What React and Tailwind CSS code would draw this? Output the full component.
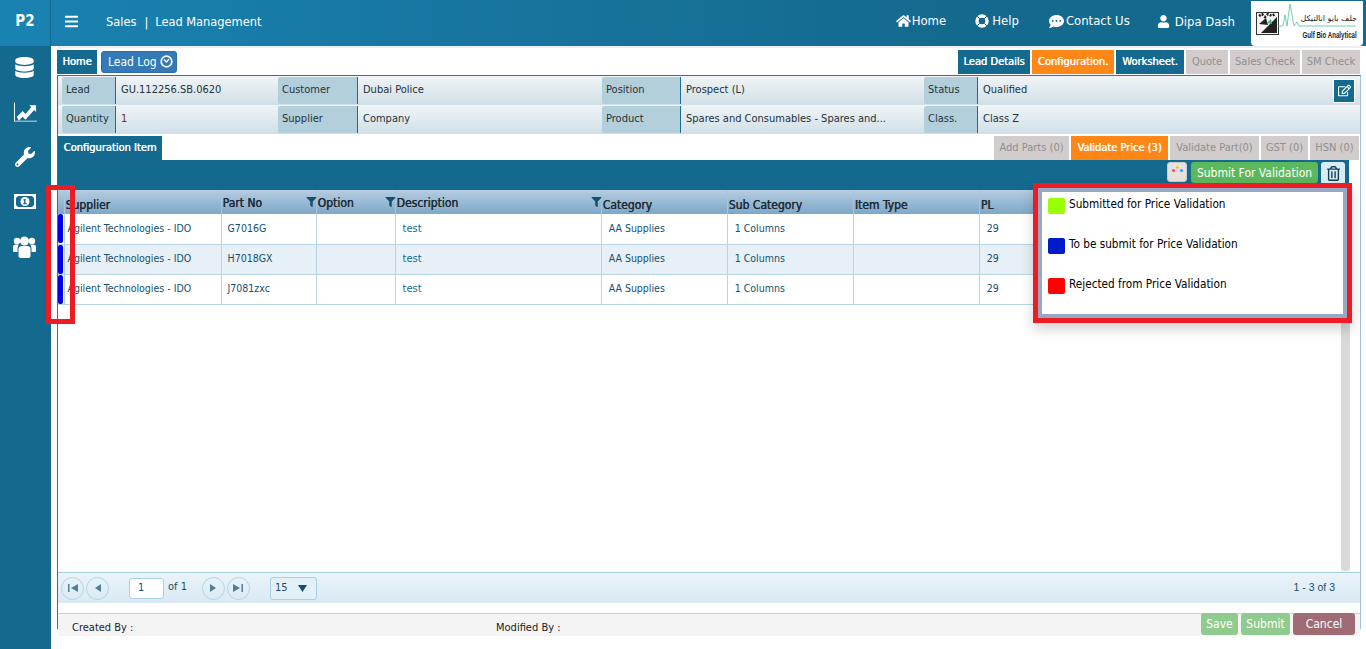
import React from 'react';
import { FaDatabase, FaWrench, FaHome, FaCommentDots, FaUser, FaRegEdit, FaRegTrashAlt, FaFilter, FaBars } from 'react-icons/fa';

const rows = [
  { part: 'G7016G' },
  { part: 'H7018GX' },
  { part: 'J7081zxc' },
];

const columns = [
  { label: 'Supplier', width: 157, low: true },
  { label: 'Part No', width: 95, filter: true },
  { label: 'Option', width: 79, filter: true },
  { label: 'Description', width: 206, filter: true },
  { label: 'Category', width: 126, low: true },
  { label: 'Sub Category', width: 126, low: true },
  { label: 'Item Type', width: 126, low: true },
  { label: 'PL', width: 360, low: true },
];

const InfoLabel = ({ children, width }) => (
  <div className="h-full flex items-center pl-[4px] bg-[#b3cfdb] border-r border-[#1a6d93] rounded-l-[2px] shrink-0" style={{ width }}>
    {children}
  </div>
);

const InfoRow = ({ cells, children }) => (
  <div className="h-[29px] flex items-stretch pl-[4px] py-px bg-gradient-to-b from-[#f0f4f6] to-[#d0e0e8]">
    {cells.map((c) => (
      <React.Fragment key={c.label}>
        <InfoLabel width={c.w}>{c.label}</InfoLabel>
        <div className="flex items-center pl-[5px] shrink-0" style={{ width: c.vw }}>{c.value}</div>
      </React.Fragment>
    ))}
    {children}
  </div>
);

const TopTab = ({ children, tone, w, low }) => {
  const tones = {
    teal: 'bg-[#14698e] text-white [text-shadow:0.4px_0_0_currentColor]',
    orange: 'bg-[#ff8718] text-white [text-shadow:0.4px_0_0_currentColor]',
    grey: 'bg-[#d3cccc] text-[#8f8f8f]',
  };
  return <div className={`h-6 flex items-center justify-center whitespace-nowrap text-[11px] ${low ? 'pt-px' : ''} ${tones[tone]}`} style={{ width: w }}>{children}</div>;
};

const PagerButton = ({ children }) => (
  <div className="w-[23px] h-[23px] rounded-full border border-[#b3d4e6] flex items-center justify-center">
    <svg width="12" height="10" viewBox="0 0 12 10" fill="#4f7f99">{children}</svg>
  </div>
);

const Logo = () => (
  <div className="w-[112px] h-[45px] bg-white rounded-b-[4px] relative overflow-hidden shrink-0">
    <svg width="106" height="36" viewBox="0 0 106 36" className="absolute left-[5px] top-[1px]">
      <rect x="0.5" y="10.5" width="22" height="22" fill="#f4f4f4" stroke="#333" />
      <path d="M5 31 L21 15 L21 31 Z" fill="#222" />
      <path d="M3 14 l3 -2 l3 3 l3 -3 l4 2 l3 -2" stroke="#222" strokeWidth="2.5" fill="none" strokeDasharray="2 1.5" />
      <path d="M3 22 l7 -6 l2 7 z" fill="#222" />
      <path d="M11 21 l4 -4 l1 5 z" fill="#4caf7a" />
      <path d="M22 24 H27 L29 13 L31 24 L34 2 L38 24 L41 20 L43 24 H100" stroke="#4ec39a" strokeWidth="0.8" fill="none" />
    </svg>
    <div className="absolute right-[6px] top-[13px] text-[8px] leading-[10px] text-[#222] font-['DejaVu_Sans',sans-serif]" dir="rtl">جلف بايو انالتيكل</div>
    <div className="absolute right-[6px] top-[29px] text-[9px] leading-[10px] font-bold text-[#222] whitespace-nowrap origin-right scale-x-[0.68] font-['Liberation_Sans',sans-serif]">Gulf Bio Analytical</div>
  </div>
);

const App = () => {
  return (
    <div className="w-[1366px] h-[649px] overflow-hidden bg-white flex flex-col text-[11px] text-[#24323a] font-['DejaVu_Sans_Condensed','DejaVu_Sans',sans-serif] relative">
      {/* header */}
      <header className="h-[46px] flex shrink-0 bg-gradient-to-r from-[#1a82b1] to-[#14698e] to-70% text-white">
        <div className="w-[51px] border-r border-[#14698e] flex items-center justify-center text-[15px] font-bold bg-[#1a82b1] shrink-0 pb-[3px]">P2</div>
        <div className="w-[55px] pl-[13px] pb-[3px] flex items-center shrink-0"><FaBars className="w-[15px] h-[15px]" /></div>
        <div className="text-[12.7px] flex items-center pb-[3px]">Sales<span className="ml-[8px] mr-[7px]">|</span>Lead Management</div>
        <div className="ml-auto flex items-center text-[13px]">
          <span className="flex items-center gap-px mr-[29px] pb-[4px]"><FaHome className="w-[15px] h-[14px]" />Home</span>
          <span className="flex items-center gap-[3px] mr-[30px] pb-[4px]">
            <svg width="14" height="14" viewBox="0 0 14 14">
              <circle cx="7" cy="7" r="5" fill="none" stroke="#fff" strokeWidth="3.4" />
              <path d="M2.2 2.2l2.5 2.5M11.8 2.2L9.3 4.7M2.2 11.8l2.5-2.5M11.8 11.8L9.3 9.3" stroke="#14698e" strokeWidth="1" />
            </svg>
            Help
          </span>
          <span className="flex items-center gap-[2px] mr-[27px] pb-[4px]"><FaCommentDots className="w-[15px] h-[15px]" />Contact Us</span>
          <span className="flex items-center gap-[5px] mr-[16px] pb-[3px]"><FaUser className="w-[13px] h-[13px]" />Dipa Dash</span>
          <div className="mr-[3px]"><Logo /></div>
        </div>
      </header>

      <div className="flex flex-1 min-h-0">
        {/* sidebar */}
        <aside className="w-[51px] bg-[#14698e] text-white shrink-0 flex flex-col items-center pt-[11px] pr-[2px]">
          <FaDatabase className="w-[19px] h-[21px]" />
          <svg width="23" height="20" viewBox="0 0 24 20" fill="#fff" className="mt-[24px] ml-[2px]">
            <path d="M0 0h1v19h23v1H0z" />
            <path d="M3 15l6-6 3 3 6-7-2-2h7v7l-2-2-9 10-3-3-4 4z" />
          </svg>
          <FaWrench className="w-[20px] h-[20px] mt-[25px]" />
          <svg width="22" height="15" viewBox="0 0 22 15" className="mt-[27px]">
            <rect width="22" height="15" fill="#fff" />
            <path d="M4 2h14l2 2v7l-2 2H4l-2-2V4z" fill="#14698e" />
            <circle cx="11" cy="7.500" r="4.500" fill="#fff" />
            <path d="M10 5h1.500v4.200H13v1H9v-1h1.100V6.200H9z" fill="#14698e" />
          </svg>
          <svg width="23" height="22" viewBox="0 0 23 22" fill="#fff" className="mt-[27px]">
            <circle cx="11.5" cy="5" r="4.5" />
            <circle cx="4" cy="5" r="3.2" />
            <circle cx="19" cy="5" r="3.2" />
            <path d="M5.5 13c0-2 1.500-3 3-3h6c1.500 0 3 1 3 3v7c0 1-1 2-2 2h-8c-1 0-2-1-2-2z" />
            <path d="M0 11c0-1.500 1-2.500 2.500-2.500H6c-1 1-1.500 2.500-1.500 4.500v3H1.500C.5 16 0 15.500 0 14.500zM23 11c0-1.500-1-2.500-2.500-2.500H17c1 1 1.500 2.500 1.500 4.500v3h3c1 0 1.500-.5 1.500-1.500z" />
          </svg>
        </aside>

        {/* main */}
        <main className="flex-1 min-w-0 pl-[6px] pr-[5px] flex flex-col">
          {/* top tabs */}
          <div className="flex items-center h-[28px] pt-[1px] border-t-2 border-[#e9eff3]">
            <div className="h-6 w-10 pt-px bg-[#14698e] text-white [text-shadow:0.4px_0_0_currentColor] flex items-center justify-center">Home</div>
            <div className="h-[22px] w-[76px] ml-1 pl-[6px] rounded-[3px] bg-[#337ab7] border border-[#2e6da4] text-white text-[12px] flex items-center gap-[3px]">
              Lead Log
              <svg width="13" height="13" viewBox="0 0 13 13" className="shrink-0">
                <circle cx="6.500" cy="6.500" r="5.300" fill="none" stroke="#fff" strokeWidth="1.700" />
                <path d="M4 4.500L6.500 7 9 4" stroke="#fff" strokeWidth="1.200" fill="none" />
              </svg>
            </div>
            <div className="ml-auto flex gap-[2px] mr-px">
              <TopTab low tone="teal" w={72}>Lead Details</TopTab>
              <TopTab low tone="orange" w={82}>Configuration.</TopTab>
              <TopTab low tone="teal" w={68}>Worksheet.</TopTab>
              <TopTab low tone="grey" w={42}>Quote</TopTab>
              <TopTab low tone="grey" w={70}>Sales Check</TopTab>
              <TopTab low tone="grey" w={58}>SM Check</TopTab>
            </div>
          </div>

          {/* panel */}
          <div className="h-[554px] border-l border-t border-r border-l-[#1f77ad] border-t-[#1f77ad] border-r-[#9cc4dc] flex flex-col mt-px">
            <InfoRow
              cells={[
                { label: 'Lead', w: 54, value: 'GU.112256.SB.0620', vw: 162 },
                { label: 'Customer', w: 80, value: 'Dubai Police', vw: 244 },
                { label: 'Position', w: 79, value: 'Prospect (L)', vw: 243 },
                { label: 'Status', w: 54, value: 'Qualified', vw: 300 },
              ]}
            >
              <div className="ml-auto mr-[5px] w-[22px] h-[24px] bg-[#14698e] text-white flex items-center justify-center self-center border border-white shrink-0">
                <FaRegEdit className="w-[13px] h-[13px]" />
              </div>
            </InfoRow>
            <InfoRow
              cells={[
                { label: 'Quantity', w: 54, value: <span className="text-[#7a2a1a]">1</span>, vw: 162 },
                { label: 'Supplier', w: 80, value: 'Company', vw: 244 },
                { label: 'Product', w: 79, value: 'Spares and Consumables - Spares and...', vw: 243 },
                { label: 'Class.', w: 54, value: 'Class Z', vw: 300 },
              ]}
            />

            {/* sub tabs */}
            <div className="h-[26px] flex items-center pt-[2px]">
              <div className="h-6 w-[104px] bg-[#14698e] text-white [text-shadow:0.4px_0_0_currentColor] flex items-center justify-center whitespace-nowrap">Configuration Item</div>
              <div className="ml-auto flex gap-[2px] mr-px">
                <TopTab tone="grey" w={75}>Add Parts (0)</TopTab>
                <TopTab tone="orange" w={97}>Validate Price (3)</TopTab>
                <TopTab tone="grey" w={89}>Validate Part(0)</TopTab>
                <TopTab tone="grey" w={47}>GST (0)</TopTab>
                <TopTab tone="grey" w={49}>HSN (0)</TopTab>
              </div>
            </div>

            {/* action bar */}
            <div className="h-[30px] bg-[#14698e] mr-[11px] flex items-start justify-end pt-[2px] pr-[4px]">
              <div className="w-5 h-[20px] bg-[#e7e2de] rounded-[3px] border border-[#ccc] relative overflow-hidden">
                <span className="absolute left-[4px] top-[6px] w-[3px] h-[3px] rounded-full bg-[#ff3d8b]" />
                <span className="absolute left-[8px] top-[3px] w-[3px] h-[3px] rounded-full bg-[#f7c23a]" />
                <span className="absolute left-[12px] top-[6px] w-[3px] h-[3px] rounded-full bg-[#2d9bf0]" />
              </div>
              <div className="h-[21px] w-[127px] ml-1 bg-[#5cb85c] rounded-[3px] text-white text-[12px] flex items-center justify-center">Submit For Validation</div>
              <div className="w-6 h-[23px] ml-[3px] bg-[#d9ecf5] rounded-[3px] flex items-center justify-center text-[#0f3f57]">
                <FaRegTrashAlt className="w-[13px] h-[15px]" />
              </div>
            </div>

            {/* grid */}
            <div className="flex-1 min-h-0 relative">
              <table className="table-fixed border-collapse w-[1282px]">
                <colgroup>
                  <col className="w-[6px]" />
                  {columns.map((c) => <col key={c.label} style={{ width: c.width }} />)}
                </colgroup>
                <thead>
                  <tr className="h-[24px] bg-gradient-to-b from-[#b5cde0] to-[#7ea7c9]">
                    <th className="border-r border-[#a9c6d8]" />
                    {columns.map((c) => (
                      <th key={c.label} className="relative border-r border-[#a9c6d8] p-0 text-left font-normal [text-shadow:0.4px_0_0_currentColor] text-[12px] text-[#1d2a33]">
                        <span className={`block pl-[1px] ${c.low ? 'pt-[5px]' : 'pt-[1px]'}`}>{c.label}</span>
                        {c.filter && <FaFilter className="absolute right-[-1px] top-[7px] w-[11px] h-[10px] text-[#14506e]" />}
                      </th>
                    ))}
                  </tr>
                </thead>
                <tbody>
                  {rows.map((r, i) => (
                    <tr key={r.part} className={`h-[30px] border-b border-[#b8d4e3] ${i === 1 ? 'bg-[#e6f0f6]' : 'bg-white'}`}>
                      <td className="p-0 relative align-middle border-r border-[#b8d4e3]">
                        <div className="w-[5px] h-[29px] bg-[#0000ee] rounded-[2px]" />
                      </td>
                      <td className="p-0 pl-[3px] text-[#14506e] text-[10.5px] border-r border-[#b8d4e3] whitespace-nowrap">Agilent Technologies - IDO</td>
                      <td className="p-0 pl-[6px] text-[#14506e] text-[10.5px] border-r border-[#b8d4e3]">{r.part}</td>
                      <td className="border-r border-[#b8d4e3]" />
                      <td className="p-0 pl-[7px] text-[#14698e] border-r border-[#b8d4e3]">test</td>
                      <td className="p-0 pl-[7px] text-[#14506e] text-[10.5px] border-r border-[#b8d4e3]">AA Supplies</td>
                      <td className="p-0 pl-[7px] text-[#14506e] text-[10.5px] border-r border-[#b8d4e3]">1 Columns</td>
                      <td className="border-r border-[#b8d4e3]" />
                      <td className="p-0 pl-[7px] text-[#14506e] text-[10.5px]">29</td>
                    </tr>
                  ))}
                </tbody>
              </table>
              {/* scrollbar */}
              <div className="absolute right-[10px] top-0 bottom-0 w-[9px] bg-[#f4f4f4]">
                <div className="absolute left-0 right-0 top-[120px] bottom-px bg-[#d9d9d9] rounded-[4px]" />
              </div>
            </div>

            {/* pager */}
            <div className="h-[31px] border-t border-[#a9d0e4] bg-gradient-to-b from-[#eaf4f9] to-[#d9e9f3] flex items-center pl-[3px] pr-[25px] shrink-0 text-[#1d4a63]">
              <div className="flex gap-[2px]">
                <PagerButton><path d="M1 1h1.500v8H1zM11 1v8L4 5z" /></PagerButton>
                <PagerButton><path d="M9 1v8L3 5z" /></PagerButton>
              </div>
              <div className="ml-[20px] w-[35px] h-[21px] bg-white rounded-[3px] border border-[#a9d0e4] flex items-center pl-[8px] text-[#14506e]">1</div>
              <span className="ml-[4px] pb-px">of 1</span>
              <div className="flex gap-[2px] ml-[15px]">
                <PagerButton><path d="M3 1v8l6-4z" /></PagerButton>
                <PagerButton><path d="M1 1v8l7-4zM9.500 1H11v8H9.500z" /></PagerButton>
              </div>
              <div className="ml-[20px] w-[47px] h-[23px] rounded-[3px] border border-[#a9d0e4] flex items-center justify-between pl-[4px] pr-[9px] bg-[#e4f0f7]">
                15
                <svg width="9" height="7" viewBox="0 0 9 7" fill="#14506e"><path d="M0 0h9L4.500 7z" /></svg>
              </div>
              <span className="ml-auto font-['Liberation_Sans',sans-serif] text-[#14506e] text-[10.5px]">1 - 3 of 3</span>
            </div>
            <div className="h-[10px] shrink-0" />
            <div className="h-[23px] shrink-0 border-t border-[#b3d9ea] bg-[#f4f4f4] flex items-center pl-[14px] pt-[6px] relative -mb-[7px]">
              <span className="text-[#222]">Created By :</span>
              <span className="absolute left-[438px] text-[#222]">Modified By :</span>
            </div>
          </div>
        </main>
      </div>

      {/* footer buttons */}
      <div className="absolute left-[1201px] top-[613px] flex gap-[3px] text-white text-[12px]">
        <div className="w-[37px] h-[22px] rounded-[3px] bg-[#8fcb8f] flex items-center justify-center">Save</div>
        <div className="w-[49px] h-[22px] rounded-[3px] bg-[#8fcb8f] flex items-center justify-center">Submit</div>
        <div className="w-[62px] h-[22px] rounded-[3px] bg-[#a06c74] flex items-center justify-center">Cancel</div>
      </div>

      {/* legend popover */}
      <div className="absolute left-[1033px] top-[183px] w-[319px] h-[140px] border-[5px] border-[#ed1c24] shadow-[0_6px_12px_rgba(0,0,0,0.18)]">
        <div className="w-full h-full border-[4px] border-[#97a8c2] bg-white pl-[6px] pt-[4px] text-[11.7px] text-black">
          <div className="h-10 flex items-start gap-[4px]"><span className="w-[17px] h-[16px] rounded-[2px] bg-[#99ff00] mt-[2px]" /><span>Submitted for Price Validation</span></div>
          <div className="h-10 flex items-start gap-[4px]"><span className="w-[17px] h-[16px] rounded-[2px] bg-[#001bcc] mt-[2px]" /><span>To be submit for Price Validation</span></div>
          <div className="h-10 flex items-start gap-[4px]"><span className="w-[17px] h-[16px] rounded-[2px] bg-[#ff0000] mt-[2px]" /><span>Rejected from Price Validation</span></div>
        </div>
      </div>

      {/* red marker around the status column */}
      <div className="absolute left-[46px] top-[185px] w-[29px] h-[139px] border-[5px] border-[#ed1c24]" />
    </div>
  );
};

export default App;
